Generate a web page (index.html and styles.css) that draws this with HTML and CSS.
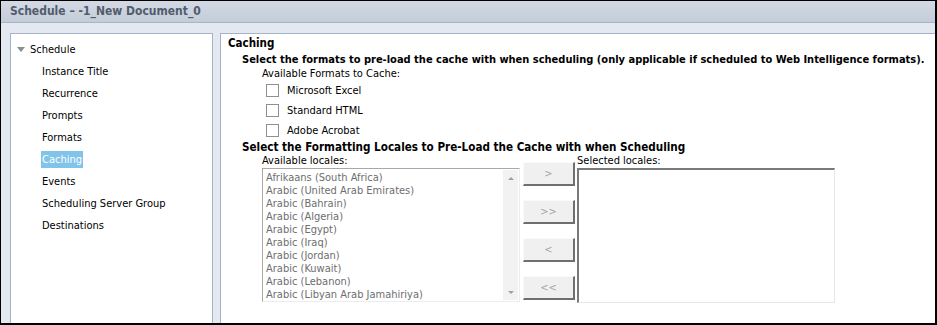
FILE: index.html
```html
<!DOCTYPE html>
<html lang="en">
<head>
    <meta charset="UTF-8">
    <title>Schedule</title>
    <link rel="stylesheet" href="styles.css">
</head>
<body>

    <div id="janela">

        <div class="barraTitulo">Schedule &ndash; -1_New Document_0</div>

        <div class="principal">

            <div class="navegacao">
                <div class="raiz"><span class="seta"></span>Schedule</div>
                <div class="item">Instance Title</div>
                <div class="item">Recurrence</div>
                <div class="item">Prompts</div>
                <div class="item">Formats</div>
                <div class="item"><span class="ativo">Caching</span></div>
                <div class="item">Events</div>
                <div class="item">Scheduling Server Group</div>
                <div class="item">Destinations</div>
            </div>

            <div class="conteudo">
                <div class="titulo">Caching</div>
                <div class="subtitulo">Select the formats to pre-load the cache with when scheduling (only applicable if scheduled to Web Intelligence formats).</div>
                <div class="rotulo">Available Formats to Cache:</div>

                <label class="opcao"><span class="caixa"></span>Microsoft Excel</label>
                <label class="opcao"><span class="caixa"></span>Standard HTML</label>
                <label class="opcao"><span class="caixa"></span>Adobe Acrobat</label>

                <div class="subtitulo2">Select the Formatting Locales to Pre-Load the Cache with when Scheduling</div>

                <div class="locais">
                    <div class="coluna">
                        <div class="rotuloLista">Available locales:</div>
                        <div class="lista">
                            <div class="linhas">
                                <div>Afrikaans (South Africa)</div>
                                <div>Arabic (United Arab Emirates)</div>
                                <div>Arabic (Bahrain)</div>
                                <div>Arabic (Algeria)</div>
                                <div>Arabic (Egypt)</div>
                                <div>Arabic (Iraq)</div>
                                <div>Arabic (Jordan)</div>
                                <div>Arabic (Kuwait)</div>
                                <div>Arabic (Lebanon)</div>
                                <div>Arabic (Libyan Arab Jamahiriya)</div>
                            </div>
                            <div class="rolagem">
                                <span class="cima"></span>
                                <span class="baixo"></span>
                            </div>
                        </div>
                    </div>

                    <div class="botoes">
                        <div class="botao">&gt;</div>
                        <div class="botao">&gt;&gt;</div>
                        <div class="botao">&lt;</div>
                        <div class="botao">&lt;&lt;</div>
                    </div>

                    <div class="coluna">
                        <div class="rotuloLista">Selected locales:</div>
                        <div class="listaSelecionados"></div>
                    </div>
                </div>
            </div>

        </div>

    </div>

</body>
</html>
```

FILE: styles.css
```css
body{
    margin: 0;
    font-family: "DejaVu Sans Condensed", "Liberation Sans", sans-serif;
    font-size: 11px;
    color: #000;
    background-color: #fff;
}
#janela{
    width: 937px;
    height: 325px;
    box-sizing: border-box;
    border: 1px solid #000;
    border-right-width: 2px;
    border-bottom-width: 2px;
    display: flex;
    flex-direction: column;
    background-color: #e4e8f0;
}
.barraTitulo{
    height: 21px;
    line-height: 21px;
    padding-left: 9px;
    font-weight: bold;
    font-size: 12px;
    color: #525c6b;
    background: linear-gradient(#d3dae4, #c3ccd9);
    border-bottom: 1px solid #a9b4c4;
}
.principal{
    flex: 1;
    display: flex;
    gap: 7px;
    padding: 10px 0 0 9px;
    min-height: 0;
}
.navegacao{
    width: 201px;
    background-color: #fff;
    border: 1px solid #a4b3ca;
    border-bottom: none;
    padding-top: 5px;
}
.raiz{
    line-height: 22px;
    padding-left: 6px;
}
.seta{
    display: inline-block;
    width: 0;
    height: 0;
    border-left: 4px solid transparent;
    border-right: 4px solid transparent;
    border-top: 5px solid #8c8c8c;
    margin-right: 5px;
    vertical-align: 1px;
}
.item{
    line-height: 22px;
    padding-left: 31px;
}
.ativo{
    background-color: #80c4e9;
    color: #fff;
    padding: 2px 1px;
    margin-left: -1px;
}
.conteudo{
    flex: 1;
    background-color: #fff;
    border-left: 1px solid #a4b3ca;
    border-top: 1px solid #a4b3ca;
    padding: 1px 0 0 7px;
}
.titulo{
    font-weight: bold;
    font-size: 11.5px;
    line-height: 16px;
}
.subtitulo, .subtitulo2{
    font-weight: bold;
    padding-left: 14px;
    white-space: nowrap;
}
.subtitulo{
    font-size: 11px;
    line-height: 17px;
}
.subtitulo2{
    font-size: 11.6px;
    line-height: 14px;
}
.rotulo{
    line-height: 12px;
    padding-left: 34px;
}
.opcao{
    display: flex;
    align-items: center;
    height: 20px;
    padding-left: 38px;
}
.caixa{
    width: 11px;
    height: 11px;
    border: 1px solid #8f8f8f;
    background-color: #fff;
    margin-right: 8px;
}
.locais{
    display: flex;
    padding-left: 34px;
}
.rotuloLista{
    line-height: 13px;
}
.lista{
    width: 256px;
    height: 132px;
    margin-top: 1px;
    display: flex;
    border: 1px solid;
    border-color: #a8a8a8 #ececec #ececec #a8a8a8;
}
.linhas{
    flex: 1;
    padding: 2px 3px;
    color: #6e6e6e;
    line-height: 13px;
    overflow: hidden;
}
.rolagem{
    width: 15px;
    margin: 1px;
    background-color: #f2f2f2;
    display: flex;
    flex-direction: column;
    justify-content: space-between;
    align-items: center;
    padding: 7px 0 6px;
}
.cima, .baixo{
    width: 0;
    height: 0;
    border-left: 3px solid transparent;
    border-right: 3px solid transparent;
}
.cima{
    border-bottom: 3px solid #a0a0a0;
}
.baixo{
    border-top: 3px solid #a0a0a0;
}
.botoes{
    display: flex;
    flex-direction: column;
    gap: 14px;
    padding-top: 8px;
    margin: 0 2px 0 3px;
}
.botao{
    width: 49px;
    height: 21px;
    line-height: 21px;
    text-align: center;
    color: #a6a6a6;
    background-color: #f0f0f0;
    border: 1px solid;
    border-color: #fafafa #6f6f6f #6f6f6f #fafafa;
    border-right-width: 2px;
    border-bottom-width: 2px;
}
.listaSelecionados{
    width: 255px;
    height: 132px;
    background-color: #fff;
    border: 2px solid;
    border-color: #7a7a7a #e6e6e6 #e6e6e6 #7a7a7a;
    border-right-width: 1px;
    border-bottom-width: 1px;
    margin-top: 1px;
}
```
